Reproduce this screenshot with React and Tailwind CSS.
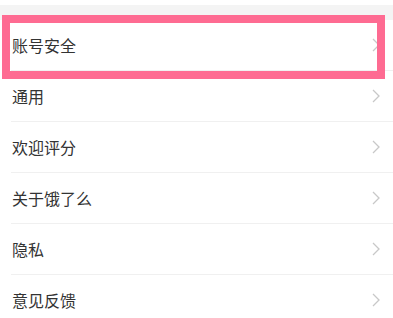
import React from 'react';

const items = ['账号安全', '通用', '欢迎评分', '关于饿了么', '隐私', '意见反馈'];

const Chevron = () => (
    <svg width="8" height="14" viewBox="0 0 8 14" className="shrink-0">
        <polyline points="1,1 7,7 1,13" fill="none" stroke="#c8c8c8" strokeWidth="1.3"/>
    </svg>
);

const App = () => {
    return (
        <div className="relative w-[393px] h-[318px] overflow-hidden bg-white" style={{fontFamily: '"Noto Sans CJK SC", "Noto Sans", sans-serif'}}>
            <div className="h-[5px] bg-white"/>
            <div className="h-[15px] bg-[#f4f4f4]"/>
            <ul>
                {items.map((name) => (
                    <li key={name} className="h-[51px] pl-[11px] flex">
                        <div className="flex-1 flex items-center justify-between pr-[13px] border-b border-[#f0f0f0]">
                            <span className="text-[16px] text-[#333] pl-px">{name}</span>
                            <Chevron/>
                        </div>
                    </li>
                ))}
            </ul>
            {/* highlight box */}
            <div className="absolute left-[2px] top-[15px] w-[383px] h-[64px] border-[8px] border-[#fe6b92]"/>
        </div>
    );
};

export default App;
